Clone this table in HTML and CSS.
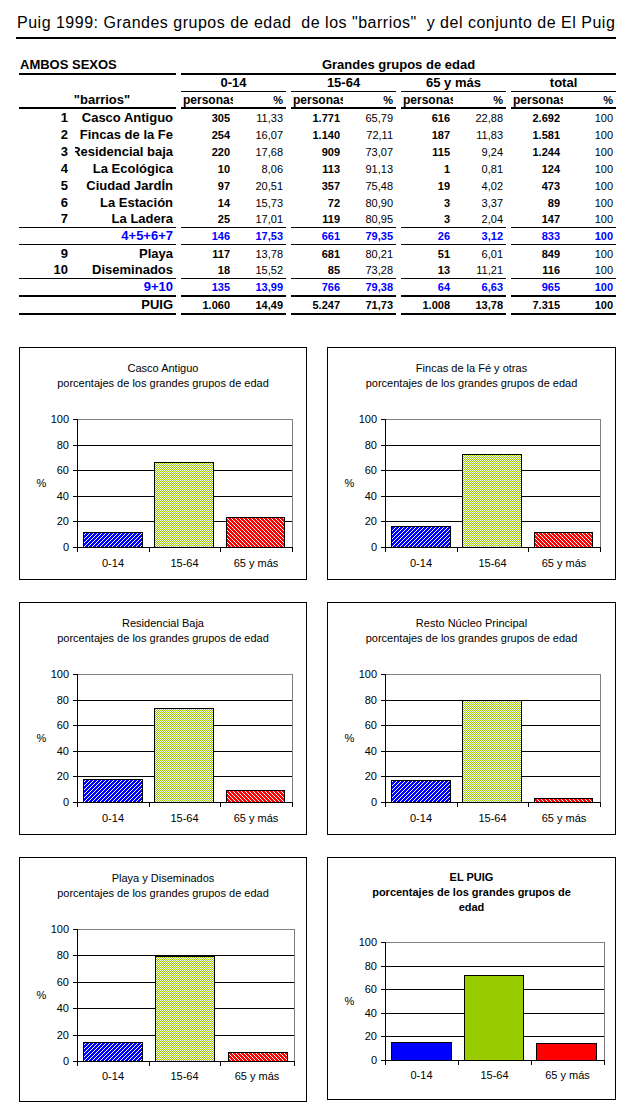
FILE: index.html
```html
<!DOCTYPE html>
<html lang="es">
<head>
<meta charset="utf-8">
<title>Puig 1999: Grandes grupos de edad</title>
<link rel="stylesheet" href="styles.css">
</head>
<body>
<div class="page">
<svg class="defs" width="0" height="0" aria-hidden="true">
  <defs>
    <pattern id="pBlue" width="4" height="4" patternUnits="userSpaceOnUse">
      <rect width="4" height="4" fill="#0000ff"/>
      <rect x="3" y="0" width="1" height="1" fill="#fff"/>
      <rect x="2" y="1" width="1" height="1" fill="#fff"/>
      <rect x="1" y="2" width="1" height="1" fill="#fff"/>
      <rect x="0" y="3" width="1" height="1" fill="#fff"/>
    </pattern>
    <pattern id="pRed" width="4" height="4" patternUnits="userSpaceOnUse">
      <rect width="4" height="4" fill="#ff0000"/>
      <rect x="0" y="0" width="1" height="1" fill="#fff"/>
      <rect x="1" y="1" width="1" height="1" fill="#fff"/>
      <rect x="2" y="2" width="1" height="1" fill="#fff"/>
      <rect x="3" y="3" width="1" height="1" fill="#fff"/>
    </pattern>
    <pattern id="pGreen" width="2" height="2" patternUnits="userSpaceOnUse">
      <rect width="2" height="2" fill="#fff"/>
      <rect x="0" y="0" width="1" height="1" fill="#99cc00"/>
      <rect x="1" y="1" width="1" height="1" fill="#99cc00"/>
    </pattern>
  </defs>
</svg>

<h1 class="title">Puig 1999: Grandes grupos de edad  de los "barrios"  y del conjunto de El Puig</h1>

<table class="data">
  <colgroup>
    <col class="c-num"><col class="c-name"><col class="c-gap">
    <col class="c-p"><col class="c-pc"><col class="c-gap">
    <col class="c-p"><col class="c-pc"><col class="c-gap">
    <col class="c-p"><col class="c-pc"><col class="c-gap">
    <col class="c-p"><col class="c-pc">
  </colgroup>
  <tbody>
    <tr class="h1 b2">
      <td colspan="2" class="lbl sexos">AMBOS SEXOS</td><td class="g"></td>
      <td colspan="11" class="lbl center">Grandes grupos de edad</td>
    </tr>
    <tr class="h2">
      <td colspan="2"></td><td class="g"></td>
      <td colspan="2" class="lbl center b1">0-14</td><td class="g"></td>
      <td colspan="2" class="lbl center b1">15-64</td><td class="g"></td>
      <td colspan="2" class="lbl center b1">65 y más</td><td class="g"></td>
      <td colspan="2" class="lbl center b1">total</td>
    </tr>
    <tr class="h3 b2">
      <td colspan="2" class="lbl center barrios">"barrios"</td><td class="g"></td>
      <td class="hp">personas</td><td class="hpc">%</td><td class="g"></td>
      <td class="hp">personas</td><td class="hpc">%</td><td class="g"></td>
      <td class="hp">personas</td><td class="hpc">%</td><td class="g"></td>
      <td class="hp">personas</td><td class="hpc">%</td>
    </tr>
    <tr class="r">
      <td class="lbl num">1</td><td class="lbl name"><div class="nm"><span>Casco Antiguo</span></div></td><td class="g"></td>
      <td class="p">305</td><td class="pc">11,33</td><td class="g"></td>
      <td class="p">1.771</td><td class="pc">65,79</td><td class="g"></td>
      <td class="p">616</td><td class="pc">22,88</td><td class="g"></td>
      <td class="p">2.692</td><td class="pc">100</td>
    </tr>
    <tr class="r">
      <td class="lbl num">2</td><td class="lbl name"><div class="nm"><span>Fincas de la Fe</span></div></td><td class="g"></td>
      <td class="p">254</td><td class="pc">16,07</td><td class="g"></td>
      <td class="p">1.140</td><td class="pc">72,11</td><td class="g"></td>
      <td class="p">187</td><td class="pc">11,83</td><td class="g"></td>
      <td class="p">1.581</td><td class="pc">100</td>
    </tr>
    <tr class="r">
      <td class="lbl num">3</td><td class="lbl name"><div class="nm"><span>Residencial baja</span></div></td><td class="g"></td>
      <td class="p">220</td><td class="pc">17,68</td><td class="g"></td>
      <td class="p">909</td><td class="pc">73,07</td><td class="g"></td>
      <td class="p">115</td><td class="pc">9,24</td><td class="g"></td>
      <td class="p">1.244</td><td class="pc">100</td>
    </tr>
    <tr class="r">
      <td class="lbl num">4</td><td class="lbl name"><div class="nm"><span>La Ecológica</span></div></td><td class="g"></td>
      <td class="p">10</td><td class="pc">8,06</td><td class="g"></td>
      <td class="p">113</td><td class="pc">91,13</td><td class="g"></td>
      <td class="p">1</td><td class="pc">0,81</td><td class="g"></td>
      <td class="p">124</td><td class="pc">100</td>
    </tr>
    <tr class="r">
      <td class="lbl num">5</td><td class="lbl name"><div class="nm"><span>Ciudad JardÍn</span></div></td><td class="g"></td>
      <td class="p">97</td><td class="pc">20,51</td><td class="g"></td>
      <td class="p">357</td><td class="pc">75,48</td><td class="g"></td>
      <td class="p">19</td><td class="pc">4,02</td><td class="g"></td>
      <td class="p">473</td><td class="pc">100</td>
    </tr>
    <tr class="r">
      <td class="lbl num">6</td><td class="lbl name"><div class="nm"><span>La Estación</span></div></td><td class="g"></td>
      <td class="p">14</td><td class="pc">15,73</td><td class="g"></td>
      <td class="p">72</td><td class="pc">80,90</td><td class="g"></td>
      <td class="p">3</td><td class="pc">3,37</td><td class="g"></td>
      <td class="p">89</td><td class="pc">100</td>
    </tr>
    <tr class="r b1">
      <td class="lbl num">7</td><td class="lbl name"><div class="nm"><span>La Ladera</span></div></td><td class="g"></td>
      <td class="p">25</td><td class="pc">17,01</td><td class="g"></td>
      <td class="p">119</td><td class="pc">80,95</td><td class="g"></td>
      <td class="p">3</td><td class="pc">2,04</td><td class="g"></td>
      <td class="p">147</td><td class="pc">100</td>
    </tr>
    <tr class="r b1 sub">
      <td class="lbl num"></td><td class="lbl name"><div class="nm"><span>4+5+6+7</span></div></td><td class="g"></td>
      <td class="p">146</td><td class="pc">17,53</td><td class="g"></td>
      <td class="p">661</td><td class="pc">79,35</td><td class="g"></td>
      <td class="p">26</td><td class="pc">3,12</td><td class="g"></td>
      <td class="p">833</td><td class="pc">100</td>
    </tr>
    <tr class="r">
      <td class="lbl num">9</td><td class="lbl name"><div class="nm"><span>Playa</span></div></td><td class="g"></td>
      <td class="p">117</td><td class="pc">13,78</td><td class="g"></td>
      <td class="p">681</td><td class="pc">80,21</td><td class="g"></td>
      <td class="p">51</td><td class="pc">6,01</td><td class="g"></td>
      <td class="p">849</td><td class="pc">100</td>
    </tr>
    <tr class="r b1">
      <td class="lbl num">10</td><td class="lbl name"><div class="nm"><span>Diseminados</span></div></td><td class="g"></td>
      <td class="p">18</td><td class="pc">15,52</td><td class="g"></td>
      <td class="p">85</td><td class="pc">73,28</td><td class="g"></td>
      <td class="p">13</td><td class="pc">11,21</td><td class="g"></td>
      <td class="p">116</td><td class="pc">100</td>
    </tr>
    <tr class="r18 b2 sub">
      <td class="lbl num"></td><td class="lbl name"><div class="nm"><span>9+10</span></div></td><td class="g"></td>
      <td class="p">135</td><td class="pc">13,99</td><td class="g"></td>
      <td class="p">766</td><td class="pc">79,38</td><td class="g"></td>
      <td class="p">64</td><td class="pc">6,63</td><td class="g"></td>
      <td class="p">965</td><td class="pc">100</td>
    </tr>
    <tr class="r18 b2 tot">
      <td class="lbl num"></td><td class="lbl name"><div class="nm"><span>PUIG</span></div></td><td class="g"></td>
      <td class="p">1.060</td><td class="pc">14,49</td><td class="g"></td>
      <td class="p">5.247</td><td class="pc">71,73</td><td class="g"></td>
      <td class="p">1.008</td><td class="pc">13,78</td><td class="g"></td>
      <td class="p">7.315</td><td class="pc">100</td>
    </tr>
  </tbody>
</table>

<div class="charts">
  <!-- Chart 1 -->
  <div class="chart">
    <div class="ctitle"><div>Casco Antiguo</div><div>porcentajes de los grandes grupos de edad</div></div>
    <svg class="plot" width="286" height="188" viewBox="0 0 286 188">
      <path class="grid" d="M57 54.5H272M57 79.5H272M57 105.5H272M57 130.5H272"/>
      <path class="frame" d="M57 28.5H272.5V156"/>
      <rect class="bar" fill="url(#pBlue)" x="63.5" y="141.5" width="59" height="15"/>
      <rect class="bar" fill="url(#pGreen)" x="134.5" y="71.5" width="59" height="85"/>
      <rect class="bar" fill="url(#pRed)" x="206.5" y="126.5" width="58" height="30"/>
      <path class="axis" d="M57.5 28V157M53 28.5H57M53 54.5H57M53 79.5H57M53 105.5H57M53 130.5H57M53 156.5H273M57.5 156V161M129.5 156V161M200.5 156V161M272.5 156V161"/>
      <g class="ylab"><text x="49" y="32">100</text><text x="49" y="58">80</text><text x="49" y="83">60</text><text x="49" y="109">40</text><text x="49" y="134">20</text><text x="49" y="160">0</text></g>
      <text class="pct" x="21.5" y="96">%</text>
      <g class="xlab"><text x="93" y="176">0-14</text><text x="164.5" y="176">15-64</text><text x="236" y="176">65 y más</text></g>
    </svg>
  </div>
  <!-- Chart 2 -->
  <div class="chart">
    <div class="ctitle"><div>Fincas de la Fé y otras</div><div>porcentajes de los grandes grupos de edad</div></div>
    <svg class="plot" width="286" height="188" viewBox="0 0 286 188">
      <path class="grid" d="M57 54.5H272M57 79.5H272M57 105.5H272M57 130.5H272"/>
      <path class="frame" d="M57 28.5H272.5V156"/>
      <rect class="bar" fill="url(#pBlue)" x="63.5" y="135.5" width="59" height="21"/>
      <rect class="bar" fill="url(#pGreen)" x="134.5" y="63.5" width="59" height="93"/>
      <rect class="bar" fill="url(#pRed)" x="206.5" y="141.5" width="58" height="15"/>
      <path class="axis" d="M57.5 28V157M53 28.5H57M53 54.5H57M53 79.5H57M53 105.5H57M53 130.5H57M53 156.5H273M57.5 156V161M129.5 156V161M200.5 156V161M272.5 156V161"/>
      <g class="ylab"><text x="49" y="32">100</text><text x="49" y="58">80</text><text x="49" y="83">60</text><text x="49" y="109">40</text><text x="49" y="134">20</text><text x="49" y="160">0</text></g>
      <text class="pct" x="21.5" y="96">%</text>
      <g class="xlab"><text x="93" y="176">0-14</text><text x="164.5" y="176">15-64</text><text x="236" y="176">65 y más</text></g>
    </svg>
  </div>
  <!-- Chart 3 -->
  <div class="chart">
    <div class="ctitle"><div>Residencial Baja</div><div>porcentajes de los grandes grupos de edad</div></div>
    <svg class="plot" width="286" height="188" viewBox="0 0 286 188">
      <path class="grid" d="M57 54.5H272M57 79.5H272M57 105.5H272M57 130.5H272"/>
      <path class="frame" d="M57 28.5H272.5V156"/>
      <rect class="bar" fill="url(#pBlue)" x="63.5" y="133.5" width="59" height="23"/>
      <rect class="bar" fill="url(#pGreen)" x="134.5" y="62.5" width="59" height="94"/>
      <rect class="bar" fill="url(#pRed)" x="206.5" y="144.5" width="58" height="12"/>
      <path class="axis" d="M57.5 28V157M53 28.5H57M53 54.5H57M53 79.5H57M53 105.5H57M53 130.5H57M53 156.5H273M57.5 156V161M129.5 156V161M200.5 156V161M272.5 156V161"/>
      <g class="ylab"><text x="49" y="32">100</text><text x="49" y="58">80</text><text x="49" y="83">60</text><text x="49" y="109">40</text><text x="49" y="134">20</text><text x="49" y="160">0</text></g>
      <text class="pct" x="21.5" y="96">%</text>
      <g class="xlab"><text x="93" y="176">0-14</text><text x="164.5" y="176">15-64</text><text x="236" y="176">65 y más</text></g>
    </svg>
  </div>
  <!-- Chart 4 -->
  <div class="chart">
    <div class="ctitle"><div>Resto Núcleo Principal</div><div>porcentajes de los grandes grupos de edad</div></div>
    <svg class="plot" width="286" height="188" viewBox="0 0 286 188">
      <path class="grid" d="M57 54.5H272M57 79.5H272M57 105.5H272M57 130.5H272"/>
      <path class="frame" d="M57 28.5H272.5V156"/>
      <rect class="bar" fill="url(#pBlue)" x="63.5" y="134.5" width="59" height="22"/>
      <rect class="bar" fill="url(#pGreen)" x="134.5" y="54.5" width="59" height="102"/>
      <rect class="bar" fill="url(#pRed)" x="206.5" y="152.5" width="58" height="4"/>
      <path class="axis" d="M57.5 28V157M53 28.5H57M53 54.5H57M53 79.5H57M53 105.5H57M53 130.5H57M53 156.5H273M57.5 156V161M129.5 156V161M200.5 156V161M272.5 156V161"/>
      <g class="ylab"><text x="49" y="32">100</text><text x="49" y="58">80</text><text x="49" y="83">60</text><text x="49" y="109">40</text><text x="49" y="134">20</text><text x="49" y="160">0</text></g>
      <text class="pct" x="21.5" y="96">%</text>
      <g class="xlab"><text x="93" y="176">0-14</text><text x="164.5" y="176">15-64</text><text x="236" y="176">65 y más</text></g>
    </svg>
  </div>
  <!-- Chart 5 -->
  <div class="chart tall">
    <div class="ctitle"><div>Playa y Diseminados</div><div>porcentajes de los grandes grupos de edad</div></div>
    <svg class="plot" width="286" height="200" viewBox="0 0 286 200">
      <path class="grid" d="M57 54.5H274M57 81.5H274M57 107.5H274M57 134.5H274"/>
      <path class="frame" d="M57 28.5H274.5V160"/>
      <rect class="bar" fill="url(#pBlue)" x="63.5" y="141.5" width="59" height="19"/>
      <rect class="bar" fill="url(#pGreen)" x="135.5" y="55.5" width="59" height="105"/>
      <rect class="bar" fill="url(#pRed)" x="208.5" y="151.5" width="59" height="9"/>
      <path class="axis" d="M57.5 28V161M53 28.5H57M53 54.5H57M53 81.5H57M53 107.5H57M53 134.5H57M53 160.5H275M57.5 160V165M129.5 160V165M200.5 160V165M274.5 160V165"/>
      <g class="ylab"><text x="49" y="32">100</text><text x="49" y="58">80</text><text x="49" y="85">60</text><text x="49" y="111">40</text><text x="49" y="138">20</text><text x="49" y="164">0</text></g>
      <text class="pct" x="21.5" y="98">%</text>
      <g class="xlab"><text x="93" y="179">0-14</text><text x="164.5" y="179">15-64</text><text x="237" y="179">65 y más</text></g>
    </svg>
  </div>
  <!-- Chart 6 -->
  <div class="chart puig">
    <div class="ctitle bold"><div>EL PUIG</div><div>porcentajes de los grandes grupos de</div><div>edad</div></div>
    <svg class="plot" width="286" height="184" viewBox="0 0 286 184">
      <path class="grid" d="M57 51.5H276M57 74.5H276M57 98.5H276M57 121.5H276"/>
      <path class="frame" d="M57 27.5H276.5V145"/>
      <rect class="bar" fill="#0000ff" x="63.5" y="127.5" width="60" height="18"/>
      <rect class="bar" fill="#99cc00" x="136.5" y="60.5" width="59" height="85"/>
      <rect class="bar" fill="#ff0000" x="208.5" y="128.5" width="60" height="17"/>
      <path class="axis" d="M57.5 27V146M53 27.5H57M53 51.5H57M53 74.5H57M53 98.5H57M53 121.5H57M53 145.5H277M57.5 145V150M130.5 145V150M203.5 145V150M276.5 145V150"/>
      <g class="ylab"><text x="49" y="31">100</text><text x="49" y="55">80</text><text x="49" y="78">60</text><text x="49" y="102">40</text><text x="49" y="125">20</text><text x="49" y="149">0</text></g>
      <text class="pct" x="21.5" y="90">%</text>
      <g class="xlab"><text x="93.5" y="164">0-14</text><text x="166.5" y="164">15-64</text><text x="239.5" y="164">65 y más</text></g>
    </svg>
  </div>
</div>
</div>
</body>
</html>
```

FILE: styles.css
```css
* { box-sizing: border-box; }
html, body { margin: 0; padding: 0; background: #fff; }
body {
  font-family: "Liberation Sans", Arial, sans-serif;
  color: #000;
}
.page {
  width: 638px;
  padding-top: 13px;
}
.defs { display: block; width: 0; height: 0; overflow: hidden; }

/* Title */
.title {
  margin: 0 0 18px 16px;
  width: 600px;
  padding: 0 0 4px 1px;
  font-size: 16px;
  font-weight: normal;
  line-height: 20px;
  letter-spacing: 0.5px;
  white-space: pre;
  border-bottom: 2px solid #000;
}

/* Table */
.data {
  border-collapse: separate;
  border-spacing: 0;
  table-layout: fixed;
  width: 597px;
  margin-left: 19px;
  font-size: 11px;
}
.c-num { width: 56px; }
.c-name { width: 101px; }
.c-gap { width: 5px; }
.c-p { width: 52px; }
.c-pc { width: 53px; }

.data td {
  padding: 0;
  line-height: 14px;
  white-space: nowrap;
  overflow: hidden;
}
.data tr.h1 { height: 18px; }
.data tr.h2 { height: 17px; }
.data tr.h3 { height: 17px; }
.data tr.r { height: 17px; }
.data tr.r18 { height: 18px; }

.data tr.b1 > td:not(.g), .data td.b1 { border-bottom: 1px solid #000; }
.data tr.b2 > td:not(.g), .data td.b2 { border-bottom: 2px solid #000; }

.lbl { font-size: 13px; font-weight: bold; }
.center { text-align: center; }
.sexos { padding-left: 1px !important; }
.barrios { padding-left: 9px !important; }
.num { text-align: right; padding-right: 7px !important; }
.nm {
  display: flex;
  justify-content: flex-end;
  overflow: hidden;
  padding-right: 3px;
}
.nm span { flex-shrink: 0; white-space: nowrap; }

.hp { font-size: 12px; font-weight: bold; padding-left: 2px !important; }
.hpc { font-size: 11px; font-weight: bold; text-align: right; padding-right: 3px !important; }
.p { font-weight: bold; text-align: right; padding-right: 3px !important; }
.pc { text-align: right; padding-right: 3px !important; }

.sub td { color: #0000ff; font-weight: bold; }
.tot td { font-weight: bold; }

/* Charts */
.charts {
  display: grid;
  grid-template-columns: 288px 289px;
  column-gap: 20px;
  row-gap: 22px;
  margin: 32px 0 0 19px;
}
.chart {
  border: 1px solid #000;
  height: 233px;
  display: flex;
  flex-direction: column;
  background: #fff;
}
.chart.tall { height: 245px; }
.chart.puig { height: 243px; }
.ctitle {
  padding-top: 13px;
  font-size: 11px;
  line-height: 15px;
  text-align: center;
}
.ctitle.bold { font-weight: bold; padding-top: 12px; }
.plot { display: block; }
.plot text { font-family: "Liberation Sans", Arial, sans-serif; font-size: 11px; fill: #000; }
.plot .ylab text { text-anchor: end; }
.plot .xlab text, .plot .pct { text-anchor: middle; }
.plot .grid, .plot .axis { stroke: #000; stroke-width: 1; fill: none; shape-rendering: crispEdges; }
.plot .frame { stroke: #808080; stroke-width: 1; fill: none; shape-rendering: crispEdges; }
.plot .bar { stroke: #000; stroke-width: 1; shape-rendering: crispEdges; }
```
